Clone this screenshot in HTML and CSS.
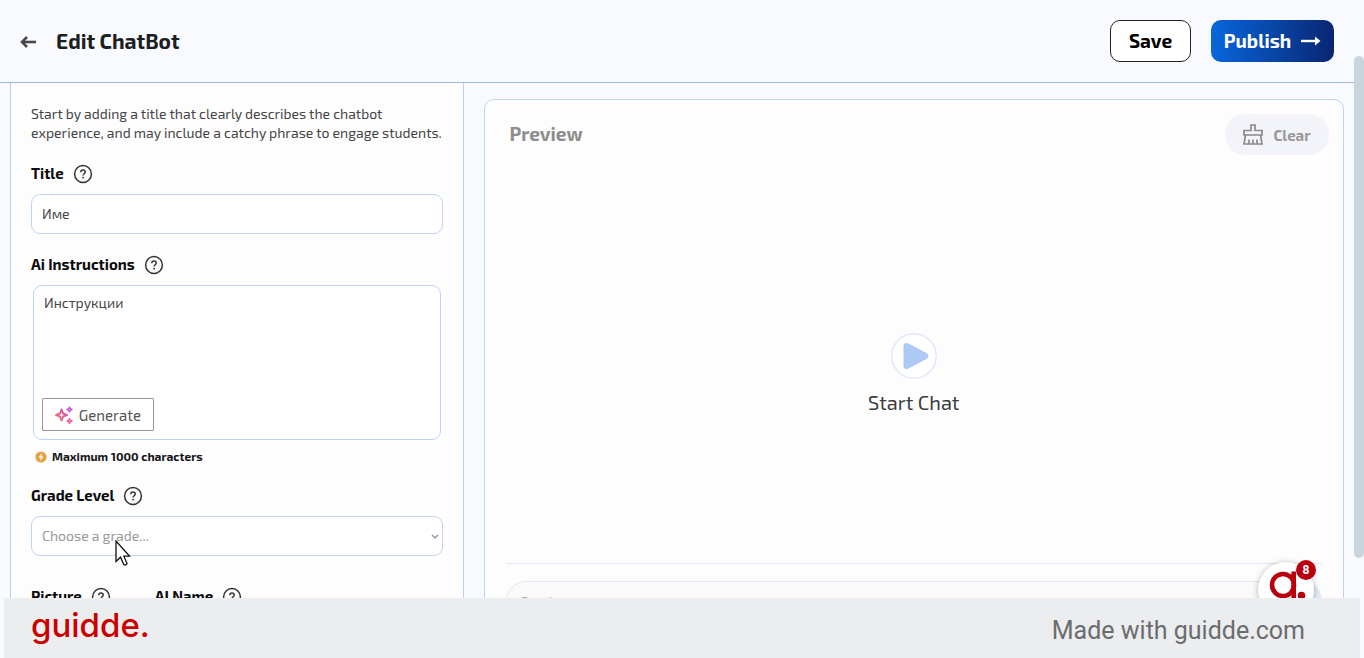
FILE: index.html
```html
<!DOCTYPE html>
<html lang="en">
<head>
<meta charset="utf-8">
<title>Edit ChatBot</title>
<link rel="stylesheet" href="styles.css">
</head>
<body>
<svg class="defs" aria-hidden="true">
  <symbol id="help" viewBox="0 0 20 20"><circle cx="10" cy="10" r="8.4" fill="none" stroke="currentColor" stroke-width="1.5"/><path d="M7.8 8.3c0-1.3.9-2.2 2.2-2.2s2.2.8 2.2 2c0 1.6-2.1 1.8-2.1 3.4" fill="none" stroke="currentColor" stroke-width="1.5"/><circle cx="10.1" cy="13.6" r=".95" fill="currentColor"/></symbol>
</svg>
<header class="topbar">
  <button class="back" type="button" aria-label="Back"><svg width="16" height="12" viewBox="0 0 16 12"><path d="M16 6H3" stroke="#484848" stroke-width="2.6"/><path d="M7 1L2 6l5 5" fill="none" stroke="#484848" stroke-width="2.6"/></svg></button>
  <h1 class="page-title">Edit ChatBot</h1>
  <button class="btn save" type="button">Save</button>
  <button class="btn publish" type="button">Publish <svg width="20" height="10" viewBox="0 0 20 10"><path d="M0 5h16" stroke="#fff" stroke-width="2.4"/><path d="M14 .5L19.5 5 14 9.500z" fill="#fff"/></svg></button>
</header>
<main class="workspace">
  <form class="panel">
    <p class="intro">Start by adding a title that clearly describes the chatbot experience, and may include a catchy phrase to engage students.</p>
    <div class="label-row"><label for="title">Title</label><svg class="help"><use href="#help"/></svg></div>
    <input class="field" id="title" type="text" value="Име">
    <div class="label-row"><label for="instructions">Ai Instructions</label><svg class="help"><use href="#help"/></svg></div>
    <div class="instructions">
      <textarea id="instructions" class="instructions-text">Инструкции</textarea>
      <button class="generate" type="button">
        <svg width="18" height="18" viewBox="0 0 18 18"><defs><linearGradient id="spark" gradientUnits="userSpaceOnUse" x1="0" y1="13" x2="17" y2="1"><stop offset="0" stop-color="#f0766c"/><stop offset=".5" stop-color="#e3579a"/><stop offset="1" stop-color="#b45ce8"/></linearGradient></defs><g fill="none" stroke="url(#spark)" stroke-linejoin="round"><path stroke-width="2" d="M6.500 3.500L8 7.500 12 9 8 10.500 6.500 14.500 5 10.500 1 9 5 7.500z"/><path stroke-width="1.500" d="M14.500 1l.8 1.700 1.700.8-1.700.8-.8 1.700-.8-1.700L12 3.500l1.700-.8z"/><path stroke="#e8639a" stroke-width="1.500" d="M14.500 12.500l.8 1.700 1.700.8-1.700.8-.8 1.700-.8-1.700L12 15l1.700-.8z"/></g></svg>
        Generate
      </button>
    </div>
    <p class="limit"><svg width="12" height="12" viewBox="0 0 12 12"><circle cx="6" cy="6" r="5.600" fill="#e9a043"/><path d="M6.800 2L3.600 6.600h2L5.200 10l3.200-4.600h-2z" fill="#fff"/></svg>Maximum 1000 characters</p>
    <div class="label-row"><label for="grade">Grade Level</label><svg class="help"><use href="#help"/></svg></div>
    <div class="select-wrap">
      <select class="field grade" id="grade"><option>Choose a grade...</option></select>
      <svg class="chevron" width="8" height="6" viewBox="0 0 8 6"><path d="M1 1l3 3 3-3" fill="none" stroke="#999" stroke-width="1.500"/></svg>
    </div>
    <div class="persona">
      <div class="label-row"><span>Picture</span><svg class="help"><use href="#help"/></svg></div>
      <div class="label-row"><span>AI Name</span><svg class="help"><use href="#help"/></svg></div>
    </div>
  </form>
  <section class="preview">
    <div class="preview-head">
      <h2 class="preview-title">Preview</h2>
      <button class="clear" type="button"><svg width="20" height="21" viewBox="0 0 20 21"><g fill="none" stroke="#8b8b8b" stroke-width="1.700"><path d="M8 6.500V1h4v5.500h7V11H1V6.500zM2.500 11L1 20h18l-1.500-9M6 20v-4.500M10 20v-4.500M14 20v-4.500"/></g></svg>Clear</button>
    </div>
    <div class="stage">
      <button class="start" type="button">
        <svg width="46" height="46" viewBox="0 0 46 46"><circle cx="23" cy="23" r="22.200" fill="#fff" stroke="#dfe8fb" stroke-width="1.500"/><path d="M12.500 13.500v19q0 5 5 3l18-9.500q4-3 0-6l-18-9.500q-5-2-5 3z" fill="#adc9f4"/></svg>
        Start Chat
      </button>
    </div>
    <div class="composer">
      <input class="message" type="text" placeholder="Send a message" aria-label="Message">
      <button class="send" type="button" aria-label="Send"></button>
    </div>
  </section>
  <div class="widget">
    <svg width="56" height="56" viewBox="0 0 56 56"><g fill="none" stroke="#b9000c" stroke-width="4.600"><circle cx="25" cy="23" r="11"/><path d="M35.700 9.500v28"/></g><circle cx="43.500" cy="33.500" r="3.800" fill="#b9000c"/></svg>
    <span class="widget-count">8</span>
  </div>
</main>
<footer class="brandbar">
  <span class="brand">guidde.</span>
  <span class="made">Made with guidde.com</span>
</footer>
<div class="scroll-thumb"></div>
<svg class="cursor" width="16" height="28" viewBox="0 0 16 28"><path d="M1 1v20.500l4.500-4.300 3.300 7.300q1.800 1.400 3.200-.9L8.900 16.200h5.800z" fill="#fff" stroke="#111" stroke-width="1.300"/></svg>
</body>
</html>
```
FILE: styles.css
```css
* { box-sizing: border-box; }
body {
  margin: 0;
  height: 100vh;
  display: flex;
  flex-direction: column;
  overflow: hidden;
  position: relative;
  background: #f9faff;
  color: #444;
  font-family: "Exo 2", "Noto Sans", "Open Sans", sans-serif;
  font-size: 14px;
}
button, input, textarea, select { font: inherit; color: inherit; }
button { cursor: pointer; }
h1, h2, p { margin: 0; }
.defs { display: none; }

.topbar {
  flex: none;
  display: flex;
  align-items: center;
  height: 83px;
  margin-right: 10px;
  padding: 0 20px;
  border-bottom: 1px solid #9fb9dd;
}
.back { display: flex; padding: 2px 0 0; border: 0; background: none; }
.page-title {
  margin: 0 auto 0 20px;
  font-size: 21px;
  line-height: 24px;
  font-weight: 700;
  color: #1c1f22;
}
.btn {
  display: flex;
  align-items: center;
  justify-content: center;
  height: 42px;
  border-radius: 10px;
  font-size: 19px;
  font-weight: 700;
}
.save { width: 81px; margin-right: 20px; padding: 0 0 2px; border: 1px solid #222; background: #fff; color: #000; }
.publish {
  gap: 10px;
  width: 123px;
  padding: 0 0 2px;
  border: 0;
  background: linear-gradient(90deg, #0866dc, #092672);
  color: #fff;
}
.publish svg { margin-top: 2px; }

.workspace {
  position: relative;
  flex: 1;
  min-height: 0;
  display: flex;
  gap: 20px;
  padding: 0 20px 0 10px;
  overflow: hidden;
}
.panel {
  flex: 0 0 34%;
  padding: 21px 20px 0;
  border: solid #b9cff0;
  border-width: 0 1px;
  background: #fdfdfe;
}
.intro { margin-bottom: 22px; line-height: 19px; color: #444; }
.label-row {
  display: flex;
  align-items: center;
  gap: 9px;
  height: 20px;
  margin-bottom: 10px;
  font-size: 15px;
  line-height: 18px;
  font-weight: 700;
  color: #0c0c0c;
}
.label-row label, .label-row span { padding-bottom: 2px; }
.help { width: 20px; height: 20px; color: #333; }
.field {
  display: block;
  width: 100%;
  height: 40px;
  margin-bottom: 21px;
  padding: 0 10px 2px;
  border: 1px solid #bfd4f5;
  border-radius: 9px;
  background: #fff;
}
.instructions {
  display: flex;
  flex-direction: column;
  align-items: flex-start;
  height: 155px;
  margin: 0 2px 9px;
  padding: 7px 8px 8px;
  border: 1px solid #bfd4f5;
  border-radius: 9px;
  background: #fff;
}
.instructions-text {
  flex: 1;
  width: 100%;
  padding: 0 2px;
  border: 0;
  outline: 0;
  resize: none;
  background: none;
  line-height: 19px;
}
.generate {
  display: flex;
  align-items: center;
  justify-content: center;
  gap: 6px;
  width: 112px;
  height: 33px;
  padding: 0;
  border: 1px solid #969696;
  border-radius: 1px;
  background: #fff;
  font-size: 15px;
  color: #555;
}
.limit {
  display: flex;
  align-items: center;
  gap: 5px;
  margin: 0 4px 22px;
  font-size: 12px;
  line-height: 15px;
  font-weight: 700;
  color: #161616;
}
.select-wrap { position: relative; margin-bottom: 31px; }
.grade { margin: 0; appearance: none; color: #999; }
.chevron { position: absolute; right: 4px; top: 18px; pointer-events: none; }
.persona { display: flex; gap: 44px; }

.preview {
  flex: 1;
  display: flex;
  flex-direction: column;
  margin: 16px 0 -40px;
  border: 1px solid #bfd4ee;
  border-radius: 10px;
  background: #fdfdfe;
}
.preview-head {
  display: flex;
  align-items: center;
  justify-content: space-between;
  padding: 14px 14px 0 25px;
}
.preview-title { padding-bottom: 2px; font-size: 19px; line-height: 24px; font-weight: 700; color: #8d8d8d; }
.clear {
  display: flex;
  align-items: center;
  justify-content: center;
  gap: 10px;
  width: 104px;
  height: 41px;
  padding: 0;
  border: 0;
  border-radius: 21px;
  background: #f3f3fa;
  font-size: 15px;
  font-weight: 700;
  color: #9a9a9a;
}
.stage {
  flex: 1;
  display: flex;
  align-items: center;
  justify-content: center;
  padding-top: 28px;
}
.start {
  display: flex;
  flex-direction: column;
  align-items: center;
  gap: 11px;
  padding: 0;
  border: 0;
  background: none;
  font-size: 20px;
  line-height: 24px;
  color: #3c3c3c;
}
.composer {
  position: relative;
  margin: 0 21px;
  padding: 17px 0 16px;
  border-top: 1px solid #e1e8f6;
}
.message {
  display: block;
  width: 100%;
  height: 40px;
  padding: 0 14px;
  border: 1px solid #dfe7f7;
  border-radius: 20px;
  background: #fafafb;
}
.message::placeholder { color: #aaa; }
.send {
  position: absolute;
  right: 0;
  top: 17px;
  width: 40px;
  height: 40px;
  border: 0;
  border-radius: 50%;
  background: #e3eaf8;
}

.widget {
  position: absolute;
  right: 50px;
  bottom: -20px;
  width: 56px;
  height: 56px;
  border-radius: 50%;
  background: #fff;
  box-shadow: 0 1px 6px rgba(0, 0, 0, .3);
}
.widget-count {
  position: absolute;
  right: -2px;
  top: -2px;
  width: 20px;
  height: 20px;
  border-radius: 50%;
  background: #b9000c;
  font: 700 12px/20px Roboto, sans-serif;
  text-align: center;
  color: #fff;
}

.brandbar {
  flex: none;
  display: flex;
  align-items: center;
  justify-content: space-between;
  height: 60px;
  margin: 0 4px;
  padding: 0 55px 0 27px;
  background: #ecedef;
}
.brand { padding-bottom: 6px; font: 500 33px/40px Inter, sans-serif; color: #cb0000; }
.made { padding-top: 6px; font: 400 25px/32px Roboto, sans-serif; color: #6b6c6e; }

.scroll-thumb {
  position: absolute;
  right: 0;
  top: 56px;
  width: 10px;
  height: 502px;
  border-radius: 5px;
  background: #c8d5dc;
}
.cursor { position: absolute; left: 115px; top: 540px; }
```
